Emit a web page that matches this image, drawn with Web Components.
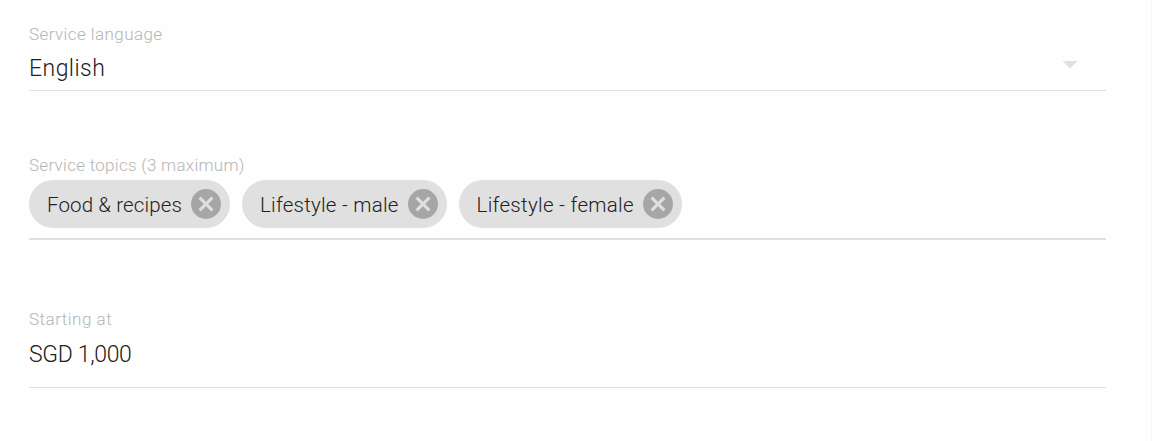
<!DOCTYPE html>
<html lang="en">
<head>
<meta charset="utf-8">
<title>Service details</title>
<style>
body {
  margin: 0;
  background: #fefefe;
  font-family: Roboto, "Liberation Sans", sans-serif;
  font-weight: 300;
  color: #212121;
}
</style>
</head>
<body>
<service-form>
  <form-field label="Service language" style="--label-spacing: .42px">
    <field-value style="--spacing: .45px">English</field-value>
    <drop-arrow slot="suffix"></drop-arrow>
  </form-field>
  <form-field label="Service topics (3 maximum)" class="topics" style="--label-spacing: .28px">
    <topic-chip style="--spacing: .13px">Food &amp; recipes</topic-chip>
    <topic-chip style="--spacing: .24px">Lifestyle - male</topic-chip>
    <topic-chip style="--spacing: .3px">Lifestyle - female</topic-chip>
  </form-field>
  <form-field label="Starting at" class="price" style="--label-spacing: .5px">
    <field-value style="--spacing: -.33px">SGD 1,000</field-value>
  </form-field>
</service-form>
<script>
const define = (name, html) => {
  customElements.define(name, class extends HTMLElement {
    constructor() {
      super();
      this.attachShadow({ mode: "open" }).innerHTML = html;
    }
  });
}

define("service-form", `<style>
:host {
  display: flex;
  flex-direction: column;
  box-sizing: border-box;
  height: 441px;
  padding: 24px 45px 0 29px;
  border-right: 1px solid #f8f8f8;
}
::slotted(.topics) {
  --line: 2px;
  --row-height: 63px;
  --row-gap: 5px;
  margin-top: 64px;
}
::slotted(.price) {
  --row-height: 58px;
  --row-gap: 12px;
  margin-top: 69px;
}
</style><slot></slot>`);

define("field-value", `<style>
:host {
  display: block;
  font-size: 23px;
  line-height: 28px;
  letter-spacing: var(--spacing, 0);
}
</style><slot></slot>`);

define("drop-arrow", `<style>
:host {
  display: block;
  margin-right: 28px;
}
svg {
  display: block;
}
</style><svg width="16" height="8" viewBox="0 0 16 8"><path d="M.5 0h15L8 7.5z" fill="#e0e0e0"/></svg>`);

define("topic-chip", `<style>
:host {
  display: flex;
  align-items: center;
  box-sizing: border-box;
  height: 48px;
  padding: 0 9px 0 18px;
  border-radius: 24px;
  background: #e0e0e0;
  font-size: 20.5px;
  letter-spacing: var(--spacing, .2px);
  white-space: nowrap;
}
span {
  padding-top: 1px;
}
svg {
  display: block;
  margin-left: 9px;
}
</style><span><slot></slot></span>
<svg width="30" height="30" viewBox="0 0 30 30"><circle cx="15" cy="15" r="15" fill="#a6a6a6"/><path d="M8.6 8.6l12.8 12.8M21.4 8.6L8.6 21.4" stroke="#e0e0e0" stroke-width="3"/></svg>`);

class FormField extends HTMLElement {
  connectedCallback() {
    const shadow = this.attachShadow({ mode: "open" });
    shadow.innerHTML = `<style>
:host {
  display: block;
  border-bottom: var(--line, 1px) solid #e0e0e0;
}
label {
  display: block;
  height: 20px;
  font-size: 17px;
  line-height: 20px;
  color: #b5b5b5;
  letter-spacing: var(--label-spacing, 0);
}
.row {
  display: flex;
  justify-content: space-between;
  align-items: flex-start;
  height: var(--row-height, 46px);
}
.content {
  display: flex;
  gap: 12px;
  padding-top: var(--row-gap, 11px);
}
.suffix {
  padding-top: 17px;
}
</style>
<label>${this.getAttribute("label")}</label>
<div class="row">
  <div class="content"><slot></slot></div>
  <div class="suffix"><slot name="suffix"></slot></div>
</div>`;
  }
}
customElements.define("form-field", FormField);
</script>
</body>
</html>
